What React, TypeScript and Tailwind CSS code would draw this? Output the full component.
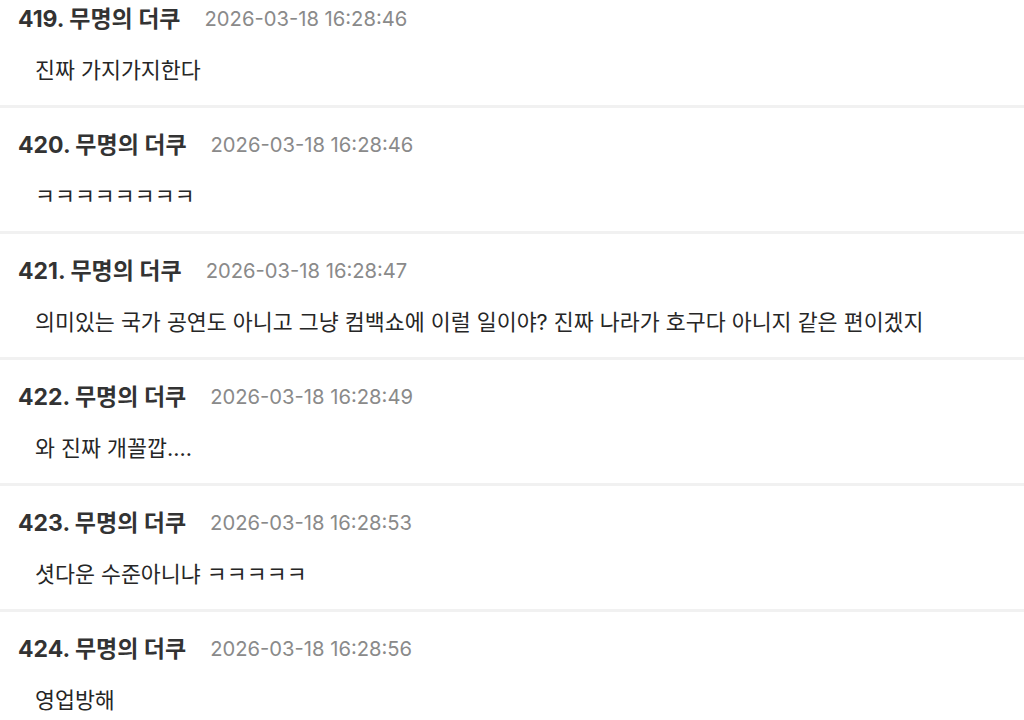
import React from "react";

type Comment = {
  no: number;
  time: string;
  text: string;
};

const comments: Comment[] = [
  { no: 419, time: "2026-03-18 16:28:46", text: "진짜 가지가지한다" },
  { no: 420, time: "2026-03-18 16:28:46", text: "ㅋㅋㅋㅋㅋㅋㅋㅋ" },
  {
    no: 421,
    time: "2026-03-18 16:28:47",
    text: "의미있는 국가 공연도 아니고 그냥 컴백쇼에 이럴 일이야? 진짜 나라가 호구다 아니지 같은 편이겠지",
  },
  { no: 422, time: "2026-03-18 16:28:49", text: "와 진짜 개꼴깝...." },
  { no: 423, time: "2026-03-18 16:28:53", text: "셧다운 수준아니냐 ㅋㅋㅋㅋㅋ" },
  { no: 424, time: "2026-03-18 16:28:56", text: "영업방해" },
];

const font = {
  fontFamily: '"Inter", "Noto Sans CJK KR", sans-serif',
};

const App: React.FC = () => {
  return (
    <div
      className="w-[1024px] h-[720px] overflow-hidden bg-white"
      style={font}
    >
      <ul className="-mt-[18px]">
        {comments.map((c) => (
          <li
            key={c.no}
            className="border-b-[3px] border-[#f1f1f1] pt-[23px] pb-[21px]"
          >
            <div className="flex items-center h-[28px] pl-[18px]">
              <span className="text-[23px] font-bold text-[#333333]">
                {c.no}. 무명의 더쿠
              </span>
              <span className="ml-[24px] text-[20.2px] text-[#8a8a8a]">
                {c.time}
              </span>
            </div>
            <p className="mt-[23px] h-[28px] leading-[28px] pl-[35px] text-[21.7px] text-[#262626]">
              {c.text}
            </p>
          </li>
        ))}
      </ul>
    </div>
  );
};

export default App;
